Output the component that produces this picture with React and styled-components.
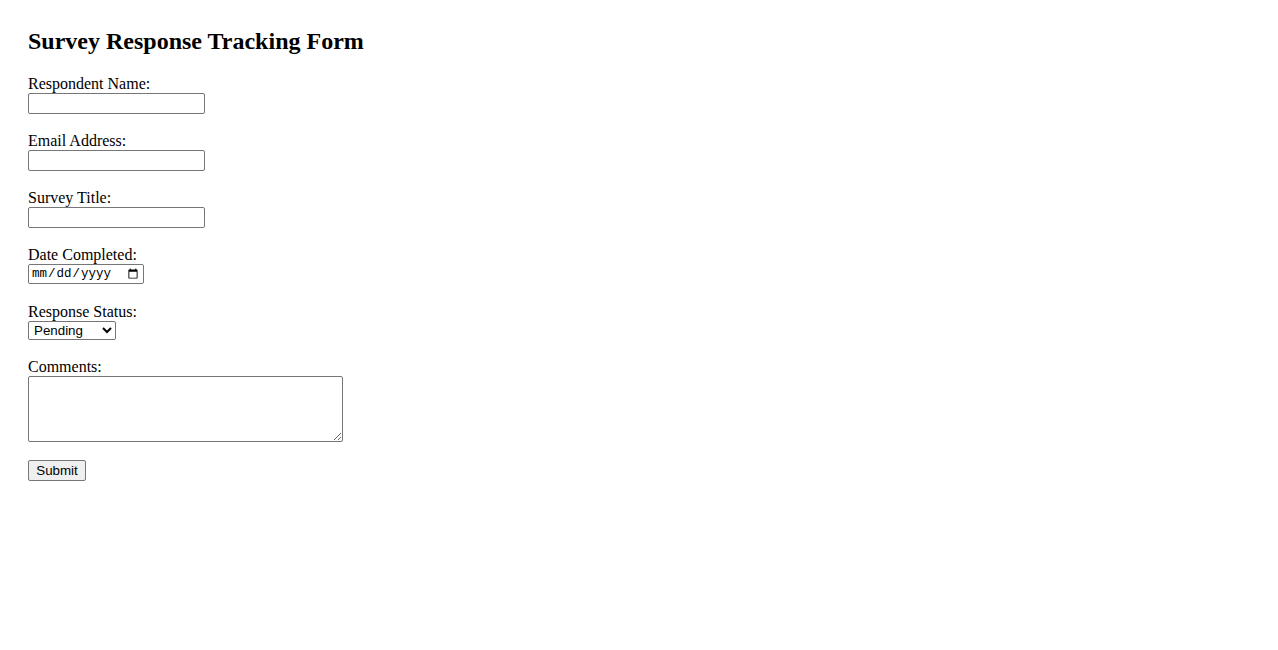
import React from 'react'
import styled, {createGlobalStyle} from 'styled-components'

const GlobalStyle = createGlobalStyle`
    body {
        margin: 8px;
        background: #fff;
        color: #000;
        font-family: "Liberation Serif", "Times New Roman", serif;
        font-size: 16px;
    }
`;

const Page = styled.div`
    padding: 20px;
`;

const Title = styled.h2`
    margin: 0 0 19px;
    font-size: 24px;
    font-weight: bold;
`;

const Form = styled.form`
    display: flex;
    flex-direction: column;
    align-items: flex-start;
`;

const Field = styled.div`
    display: flex;
    flex-direction: column;
    align-items: flex-start;
    margin-bottom: ${props => props.$gap || 17}px;
`;

const Label = styled.label`
    display: block;
    line-height: 18px;
    padding-top: 1px;
`;

const control = `
    box-sizing: border-box;
    margin: 0;
    border: 1px solid #767676;
    border-radius: 2px;
    background: #fff;
    color: #000;
`;

const TextInput = styled.input`
    ${control}
    width: 177px;
    height: 21px;
    padding: 1px 2px;
    font: 13.33px "Liberation Sans", Arial, sans-serif;
`;

const DateInput = styled.input`
    ${control}
    width: 116px;
    height: 20px;
    padding: 1px 2px;
    font: 12.5px "Liberation Mono", "Courier New", monospace;
`;

const Select = styled.select`
    ${control}
    width: 88px;
    height: 19px;
    padding: 0 0 0 1px;
    font: 13.33px "Liberation Sans", Arial, sans-serif;
`;

const TextArea = styled.textarea`
    ${control}
    width: 315px;
    height: 66px;
    padding: 2px;
    resize: both;
    font: 13.33px "Liberation Mono", monospace;
`;

const SubmitButton = styled.button`
    box-sizing: border-box;
    margin: 0;
    width: 58px;
    height: 21px;
    padding: 1px 6px;
    border: 1px solid #767676;
    border-radius: 2px;
    background: #efefef;
    color: #000;
    font: 13.33px "Liberation Sans", Arial, sans-serif;
    cursor: pointer;
`;

const App = () => {
    return (
        <Page>
            <GlobalStyle />
            <Title>Survey Response Tracking Form</Title>
            <Form onSubmit={e => e.preventDefault()}>
                <Field>
                    <Label htmlFor="name">Respondent Name:</Label>
                    <TextInput id="name" type="text" />
                </Field>
                <Field>
                    <Label htmlFor="email">Email Address:</Label>
                    <TextInput id="email" type="email" />
                </Field>
                <Field>
                    <Label htmlFor="survey">Survey Title:</Label>
                    <TextInput id="survey" type="text" />
                </Field>
                <Field $gap={18}>
                    <Label htmlFor="date">Date Completed:</Label>
                    <DateInput id="date" type="date" />
                </Field>
                <Field>
                    <Label htmlFor="status">Response Status:</Label>
                    <Select id="status" defaultValue="pending">
                        <option value="pending">Pending</option>
                        <option value="completed">Completed</option>
                        <option value="reviewed">Reviewed</option>
                    </Select>
                </Field>
                <Field $gap={18}>
                    <Label htmlFor="comments">Comments:</Label>
                    <TextArea id="comments" />
                </Field>
                <SubmitButton type="submit">Submit</SubmitButton>
            </Form>
        </Page>
    )
}

export default App;
